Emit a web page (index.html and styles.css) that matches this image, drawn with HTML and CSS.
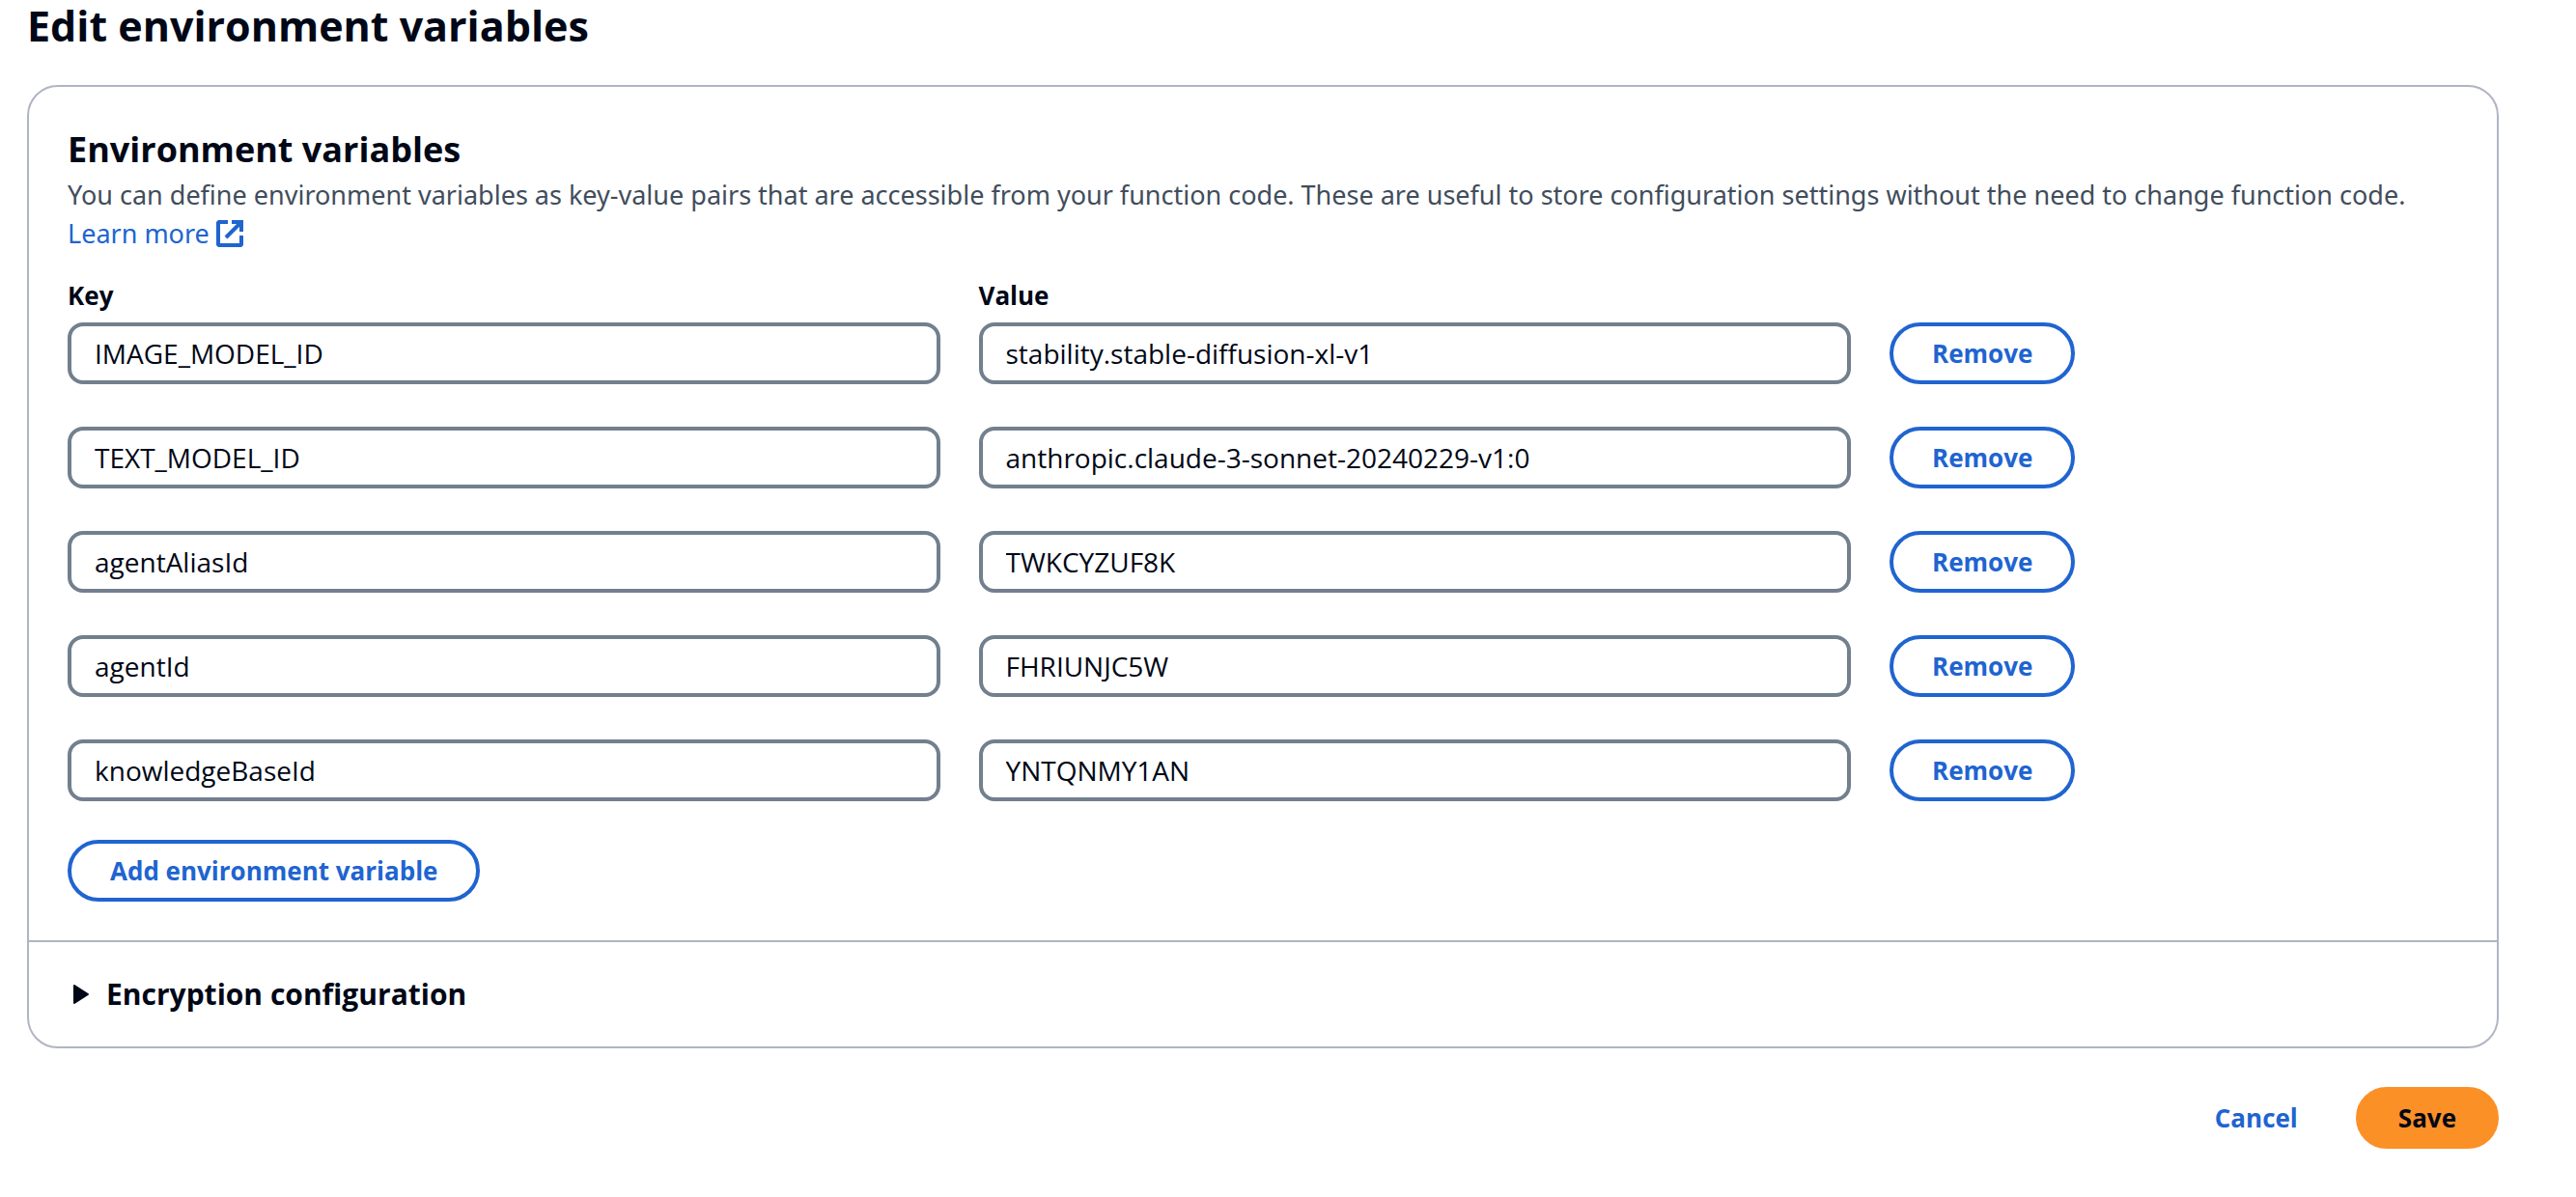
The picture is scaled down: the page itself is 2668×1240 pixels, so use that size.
FILE: index.html
```html
<!DOCTYPE html>
<html lang="en">
<head>
  <meta charset="utf-8">
  <meta name="viewport" content="width=device-width, initial-scale=1">
  <title>Edit environment variables</title>
  <link rel="stylesheet" href="styles.css">
</head>
<body>
  <main class="page">
    <h1 class="page-title">Edit environment variables</h1>
    <form class="form">
      <div class="card">
        <section class="card-body">
          <h2 class="card-title">Environment variables</h2>
          <p class="description">You can define environment variables as key-value pairs that are accessible from your function code. These are useful to store configuration settings without the need to change function code. <a class="link" href="#">Learn more
            <svg class="external-icon" viewBox="0 0 28 28" aria-hidden="true">
              <path d="M12 2H2v24h24V16" fill="none" stroke="currentColor" stroke-width="4" stroke-linejoin="bevel"/>
              <path d="M16 2h10v10M26 2L10 18" fill="none" stroke="currentColor" stroke-width="4"/>
            </svg></a></p>

          <div class="variables">
            <div class="row row-labels">
              <label class="label" for="key-1">Key</label>
              <label class="label" for="value-1">Value</label>
            </div>
            <div class="row">
              <input class="input" id="key-1" type="text" value="IMAGE_MODEL_ID">
              <input class="input" id="value-1" type="text" value="stability.stable-diffusion-xl-v1">
              <div class="row-action"><button class="button" type="button">Remove</button></div>
            </div>
            <div class="row">
              <input class="input" aria-label="Key" type="text" value="TEXT_MODEL_ID">
              <input class="input" aria-label="Value" type="text" value="anthropic.claude-3-sonnet-20240229-v1:0">
              <div class="row-action"><button class="button" type="button">Remove</button></div>
            </div>
            <div class="row">
              <input class="input" aria-label="Key" type="text" value="agentAliasId">
              <input class="input" aria-label="Value" type="text" value="TWKCYZUF8K">
              <div class="row-action"><button class="button" type="button">Remove</button></div>
            </div>
            <div class="row">
              <input class="input" aria-label="Key" type="text" value="agentId">
              <input class="input" aria-label="Value" type="text" value="FHRIUNJC5W">
              <div class="row-action"><button class="button" type="button">Remove</button></div>
            </div>
            <div class="row">
              <input class="input" aria-label="Key" type="text" value="knowledgeBaseId">
              <input class="input" aria-label="Value" type="text" value="YNTQNMY1AN">
              <div class="row-action"><button class="button" type="button">Remove</button></div>
            </div>
          </div>
          <button class="button" type="button">Add environment variable</button>
        </section>

        <details class="expandable">
          <summary class="expandable-header">
            <svg class="caret-icon" viewBox="0 0 16 20" aria-hidden="true">
              <path d="M1 1v18l14-9z" fill="currentColor" stroke="currentColor" stroke-width="2" stroke-linejoin="round"/>
            </svg>
            <span>Encryption configuration</span>
          </summary>
        </details>
      </div>

      <div class="actions">
        <button class="button button-link" type="button">Cancel</button>
        <button class="button button-primary" type="submit">Save</button>
      </div>
    </form>
  </main>
</body>
</html>
```
FILE: styles.css
```css
:root {
  --text: #000716;
  --text-secondary: #414d5c;
  --blue: #2064d0;
  --orange: #fb9026;
  --line: #b0b5c4;
  --input-line: #727f8e;
}

*, *::before, *::after {
  box-sizing: border-box;
}

body {
  margin: 0;
  background: #fff;
  color: var(--text);
  font-family: "Open Sans", "Noto Sans", sans-serif;
  font-size: 28px;
  line-height: 40px;
}

.page {
  padding: 0 80px 40px 28px;
}

.page-title {
  margin: 0 0 34px;
  font-size: 43px;
  line-height: 54px;
}

.card {
  border: 2px solid var(--line);
  border-radius: 32px;
}

.card-body {
  padding: 40px;
}

.card-title {
  margin: 0 0 2px;
  font-size: 36px;
  line-height: 50px;
}

.description {
  margin: 0 0 24px;
  color: var(--text-secondary);
  font-family: "Noto Sans", sans-serif;
  font-size: 27px;
}

.link {
  color: var(--blue);
  text-decoration: none;
  white-space: nowrap;
}

.external-icon {
  width: 28px;
  height: 28px;
  vertical-align: -4px;
}

.variables {
  display: grid;
  gap: 44px;
  margin-bottom: 40px;
}

.row {
  display: grid;
  grid-template-columns: repeat(8, minmax(0, 1fr));
  column-gap: 40px;
}

.row-labels {
  margin-bottom: -36px;
}

.label,
.input {
  grid-column: span 3;
}

.row-action {
  grid-column: span 2;
}

.label {
  font-size: 26px;
  font-weight: 700;
}

.input {
  width: 100%;
  height: 64px;
  padding: 0 24px;
  border: 4px solid var(--input-line);
  border-radius: 16px;
  background: #fff;
  color: var(--text);
  font: inherit;
}

.button {
  display: block;
  padding: 8px 40px;
  border: 4px solid var(--blue);
  border-radius: 32px;
  background: #fff;
  color: var(--blue);
  font-family: inherit;
  font-size: 26px;
  font-weight: 700;
  line-height: 40px;
  white-space: nowrap;
  cursor: pointer;
}

.button-link {
  border-color: transparent;
  background: none;
}

.button-primary {
  border-color: var(--orange);
  background: var(--orange);
  color: var(--text);
}

.expandable {
  border-top: 2px solid var(--line);
}

.expandable-header {
  display: flex;
  align-items: center;
  gap: 18px;
  padding: 34px 46px;
  font-size: 30px;
  font-weight: 700;
  list-style: none;
  cursor: pointer;
}

.caret-icon {
  width: 16px;
  height: 20px;
}

.actions {
  display: flex;
  justify-content: flex-end;
  gap: 16px;
  margin-top: 40px;
}
```
